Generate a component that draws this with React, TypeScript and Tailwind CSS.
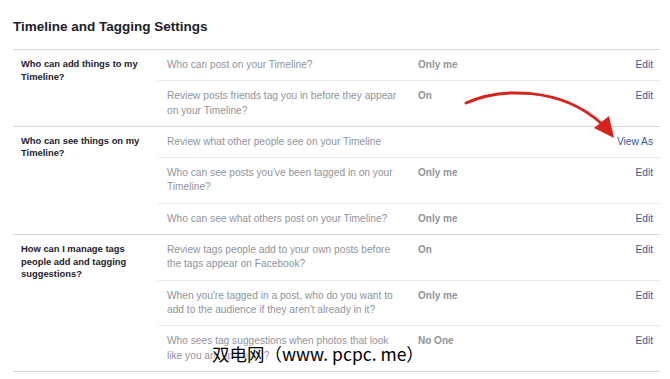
type Row = { text: string[]; value?: string; action: string };
type Section = { title: string[]; rows: Row[] };

const sections: Section[] = [
  {
    title: ['Who can add things to my', 'Timeline?'],
    rows: [
      { text: ['Who can post on your Timeline?'], value: 'Only me', action: 'Edit' },
      { text: ['Review posts friends tag you in before they appear', 'on your Timeline?'], value: 'On', action: 'Edit' },
    ],
  },
  {
    title: ['Who can see things on my', 'Timeline?'],
    rows: [
      { text: ['Review what other people see on your Timeline'], action: 'View As' },
      { text: ["Who can see posts you've been tagged in on your", 'Timeline?'], value: 'Only me', action: 'Edit' },
      { text: ['Who can see what others post on your Timeline?'], value: 'Only me', action: 'Edit' },
    ],
  },
  {
    title: ['How can I manage tags', 'people add and tagging', 'suggestions?'],
    rows: [
      { text: ['Review tags people add to your own posts before', 'the tags appear on Facebook?'], value: 'On', action: 'Edit' },
      { text: ["When you're tagged in a post, who do you want to", "add to the audience if they aren't already in it?"], value: 'Only me', action: 'Edit' },
      { text: ['Who sees tag suggestions when photos that look', 'like you are uploaded?'], value: 'No One', action: 'Edit' },
    ],
  },
];

function SettingRow({ row, first }: { row: Row; first: boolean }) {
  return (
    <div className={`flex pl-[9px] pr-[7px] py-[8px] leading-[14.3px] ${first ? '' : 'border-t border-[#e9ebee]'}`}>
      <div className="w-[251px] text-[10.2px] text-[#90949c]">
        {row.text.map((t) => (
          <div key={t}>{t}</div>
        ))}
      </div>
      <div className="flex-1 text-[10px] font-bold text-[#90949c]">{row.value}</div>
      <div className="text-[10.2px] text-[#365899]">{row.action}</div>
    </div>
  );
}

export default function App() {
  return (
    <div className="relative w-[670px] h-[379px] overflow-hidden bg-white font-['Liberation_Sans',Arial,sans-serif]">
      <div className="mx-[13px] w-[647px]">
        <h1 className="pt-[19px] mb-[14px] text-[13.5px] leading-[16px] font-bold text-[#1d2129]">
          Timeline and Tagging Settings
        </h1>

        <div className="border-b border-[#d3d6db]">
          {sections.map((s) => (
            <div key={s.title[0]} className="flex border-t border-[#d3d6db]">
              <div className="w-[145px] pl-[8px] pt-[8px] text-[9.4px] leading-[12.5px] font-bold text-[#1d2129]">
                {s.title.map((t) => (
                  <div key={t}>{t}</div>
                ))}
              </div>
              <div className="flex-1">
                {s.rows.map((r, i) => (
                  <SettingRow key={r.text[0]} row={r} first={i === 0} />
                ))}
              </div>
            </div>
          ))}
        </div>
      </div>

      {/* red annotation arrow */}
      <svg className="absolute left-0 top-0" width="670" height="379" viewBox="0 0 670 379">
        <path d="M466 103 C 500 88, 560 86, 602 124" fill="none" stroke="#d7231c" strokeWidth="3" strokeLinecap="round" />
        <path d="M594 128 L609 116 L614 138 Z" fill="#d7231c" />
      </svg>

      {/* watermark */}
      <div className="absolute left-[212px] top-[342px] text-[17.5px] leading-[24px] text-black whitespace-nowrap font-['Noto_Sans_CJK_SC','DejaVu_Sans',sans-serif] [text-shadow:0_0_2px_#fff,0_0_2px_#fff,0_0_3px_#fff]">
        双电网（www. pcpc. me）
      </div>
    </div>
  );
}
